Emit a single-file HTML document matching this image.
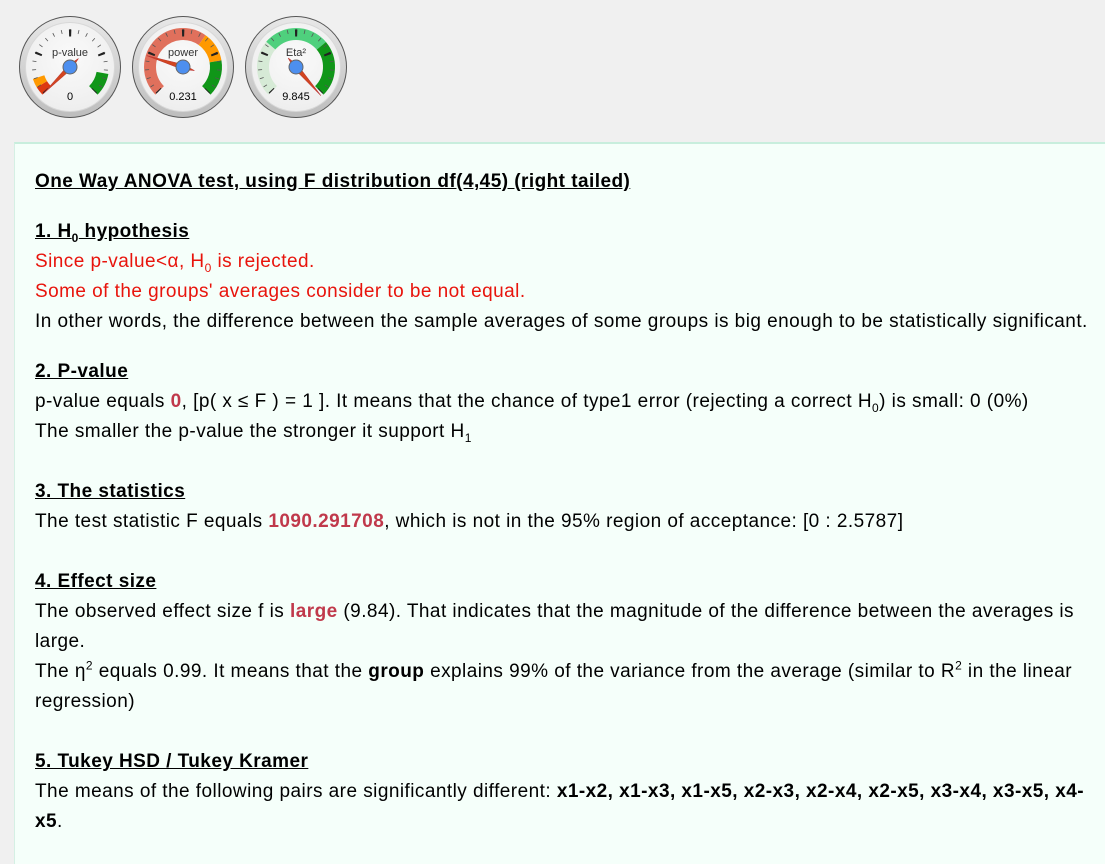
<!DOCTYPE html>
<html><head><meta charset="utf-8"><style>
html,body{margin:0;padding:0;background:#f0f0f0;width:1105px;height:841px;overflow:hidden}
body{font-family:"Liberation Sans",sans-serif;color:#000}
.panel{position:absolute;left:14px;top:142px;width:1100px;height:720px;background:#f5fffa;border-top:2px solid #c8eedd;border-left:1px solid #d5f0e4}
.l{position:absolute;left:35px;font-size:19px;white-space:nowrap;line-height:26px;letter-spacing:0.45px}
.h{font-weight:bold;text-decoration:underline}
.r{color:#e8140c}
.b{font-weight:bold;color:#c0394b}
sub,sup{font-size:12px;line-height:0}
</style></head><body>
<svg width="360" height="120" style="position:absolute;left:0;top:0">
<defs>
<radialGradient id="face" cx="50%" cy="40%" r="60%"><stop offset="0" stop-color="#fafafa"/><stop offset="1" stop-color="#eeeeee"/></radialGradient>
<linearGradient id="ring" x1="0" y1="0" x2="0" y2="1"><stop offset="0" stop-color="#e8e8e8"/><stop offset="1" stop-color="#bdbdbd"/></linearGradient>
<g id="base">
<circle r="51" fill="#555"/>
<circle r="50" fill="url(#ring)"/>
<circle r="45" fill="#d8d8d8"/>
<circle r="44" fill="url(#face)"/>
</g>
<g id="ticks">
<path d="M-25.46 25.46 A36 36 0 1 1 25.46 25.46" fill="none" stroke="#555" stroke-width="4" stroke-dasharray="0.8 7.68" stroke-dashoffset="0.4"/>
<path d="M-24.04 24.04 A34 34 0 1 1 24.04 24.04" fill="none" stroke="#222" stroke-width="7" stroke-dasharray="2.2 37.86" stroke-dashoffset="1.1"/>
</g>
</defs>
<g transform="translate(70,67)">
<use href="#base"/>
<path d="M-23.33 23.33 A33 33 0 1 1 23.33 23.33" fill="none" stroke="#dc3912" stroke-width="12" stroke-dasharray="0 0 7.8 1000"/>
<path d="M-23.33 23.33 A33 33 0 1 1 23.33 23.33" fill="none" stroke="#ff9900" stroke-width="12" stroke-dasharray="0 7.8 7.8 1000"/>
<path d="M-23.33 23.33 A33 33 0 1 1 23.33 23.33" fill="none" stroke="#109618" stroke-width="12" stroke-dasharray="0 135.3 20.3 1000"/>
<use href="#ticks"/>
<text x="0" y="-11" font-size="11" text-anchor="middle" fill="#333" font-family="Liberation Sans">p-value</text>
<text x="0" y="33" font-size="11" text-anchor="middle" fill="#000" font-family="Liberation Sans">0</text>
<polygon points="0,-38 2.5,0 0,12 -2.5,0" fill="#d2461f" stroke="#b33" stroke-width="0.5" transform="rotate(-135)"/>
<circle r="7" fill="#4d8fef" stroke="#666" stroke-width="1"/>
</g>
<g transform="translate(183,67)">
<use href="#base"/>
<path d="M-23.33 23.33 A33 33 0 1 1 23.33 23.33" fill="none" stroke="#e0705c" stroke-width="12" stroke-dasharray="0 0 98 1000"/>
<path d="M-23.33 23.33 A33 33 0 1 1 23.33 23.33" fill="none" stroke="#ff9900" stroke-width="12" stroke-dasharray="0 98 25.8 1000"/>
<path d="M-23.33 23.33 A33 33 0 1 1 23.33 23.33" fill="none" stroke="#109618" stroke-width="12" stroke-dasharray="0 123.8 32 1000"/>
<use href="#ticks"/>
<text x="0" y="-11" font-size="11" text-anchor="middle" fill="#333" font-family="Liberation Sans">power</text>
<text x="0" y="33" font-size="11" text-anchor="middle" fill="#000" font-family="Liberation Sans">0.231</text>
<polygon points="0,-38 2.5,0 0,12 -2.5,0" fill="#d2461f" stroke="#b33" stroke-width="0.5" transform="rotate(-72.6)"/>
<circle r="7" fill="#4d8fef" stroke="#666" stroke-width="1"/>
</g>
<g transform="translate(296,67)">
<use href="#base"/>
<path d="M-23.33 23.33 A33 33 0 1 1 23.33 23.33" fill="none" stroke="#d6ead6" stroke-width="12" stroke-dasharray="0 0 49 1000"/>
<path d="M-23.33 23.33 A33 33 0 1 1 23.33 23.33" fill="none" stroke="#4fd07d" stroke-width="12" stroke-dasharray="0 49 57.5 1000"/>
<path d="M-23.33 23.33 A33 33 0 1 1 23.33 23.33" fill="none" stroke="#109618" stroke-width="12" stroke-dasharray="0 106.5 49.5 1000"/>
<use href="#ticks"/>
<text x="0" y="-11" font-size="11" text-anchor="middle" fill="#333" font-family="Liberation Sans">Eta²</text>
<text x="0" y="33" font-size="11" text-anchor="middle" fill="#000" font-family="Liberation Sans">9.845</text>
<polygon points="0,-38 2.5,0 0,12 -2.5,0" fill="#d2461f" stroke="#b33" stroke-width="0.5" transform="rotate(139)"/>
<circle r="7" fill="#4d8fef" stroke="#666" stroke-width="1"/>
</g>
</svg>
<div class="panel"></div>
<div class="l h" style="top:169px">One Way ANOVA test, using F distribution df(4,45) (right tailed)</div>
<div class="l h" style="top:219px">1. H<sub>0</sub> hypothesis</div>
<div class="l r" style="top:249px">Since p-value&lt;α, H<sub>0</sub> is rejected.</div>
<div class="l r" style="top:279px">Some of the groups' averages consider to be not equal.</div>
<div class="l" style="top:309px">In other words, the difference between the sample averages of some groups is big enough to be statistically significant.</div>
<div class="l h" style="top:359px">2. P-value</div>
<div class="l" style="top:389px">p-value equals <span class="b">0</span>, [p( x ≤ F ) = 1 ]. It means that the chance of type1 error (rejecting a correct H<sub>0</sub>) is small: 0 (0%)</div>
<div class="l" style="top:419px">The smaller the p-value the stronger it support H<sub>1</sub></div>
<div class="l h" style="top:479px">3. The statistics</div>
<div class="l" style="top:509px">The test statistic F equals <span class="b">1090.291708</span>, which is not in the 95% region of acceptance: [0 : 2.5787]</div>
<div class="l h" style="top:569px">4. Effect size</div>
<div class="l" style="top:599px">The observed effect size f is <span class="b">large</span> (9.84). That indicates that the magnitude of the difference between the averages is</div>
<div class="l" style="top:629px">large.</div>
<div class="l" style="top:659px">The η<sup>2</sup> equals 0.99. It means that the <b>group</b> explains 99% of the variance from the average (similar to R<sup>2</sup> in the linear</div>
<div class="l" style="top:689px">regression)</div>
<div class="l h" style="top:749px">5. Tukey HSD / Tukey Kramer</div>
<div class="l" style="top:779px">The means of the following pairs are significantly different: <b>x1-x2, x1-x3, x1-x5, x2-x3, x2-x4, x2-x5, x3-x4, x3-x5, x4-</b></div>
<div class="l" style="top:809px"><b>x5</b>.</div>
</body></html>
